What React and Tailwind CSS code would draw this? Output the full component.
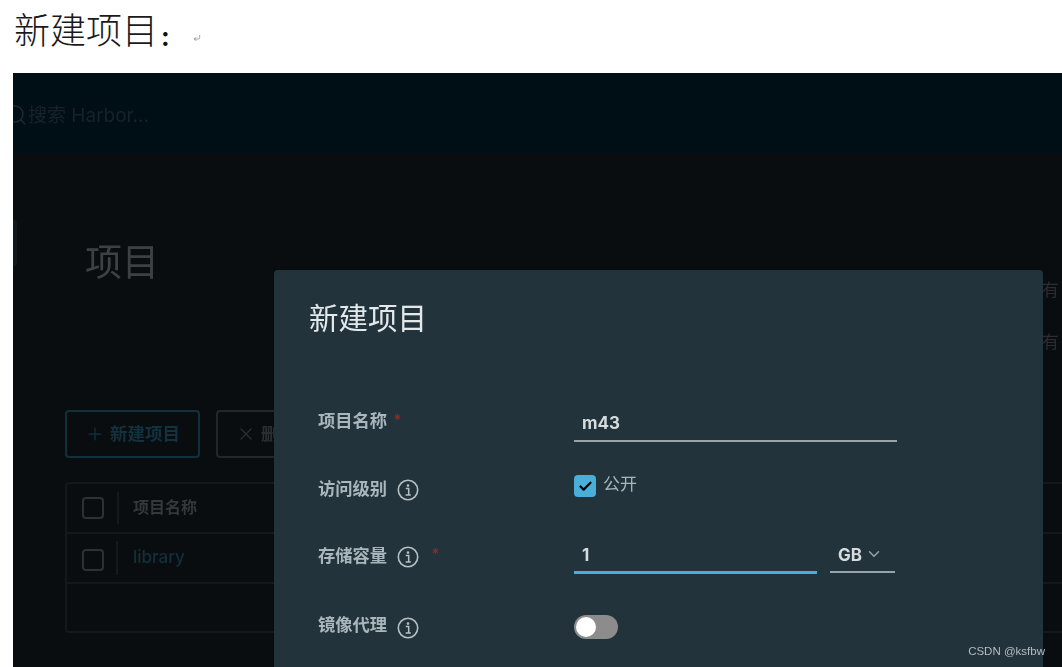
import { Plus, X, Search, ChevronDown, Check, CornerDownLeft } from 'lucide-react';

const cjk = 'font-["Inter","Noto_Sans_CJK_SC",sans-serif]';

function InfoIcon() {
    return (
        <svg width="22" height="22" viewBox="0 0 22 22" fill="none" className="text-[#b4c0c4]">
            <circle cx="11" cy="11" r="9.7" stroke="currentColor" strokeWidth="1.6" />
            <circle cx="11" cy="6.6" r="1.3" fill="currentColor" />
            <path d="M8.8 9.6h2.9v6M8.6 16h5.2" stroke="currentColor" strokeWidth="1.5" />
        </svg>
    );
}

function Required() {
    return <span className="text-[15px] font-bold leading-none text-[#8f2a20]">*</span>;
}

function FieldLabel({ children, info, required, raise }) {
    return (
        <div className="flex w-[256px] items-center">
            <span className={raise ? '-mt-[5px] text-[17.3px] font-bold text-[#a9b7bc]' : 'text-[17.3px] font-bold text-[#a9b7bc]'}>{children}</span>
            {info && <span className="ml-[10px] mt-[1px] flex"><InfoIcon /></span>}
            {required && <span className={info ? 'ml-[12px] -mt-[6px]' : 'ml-[6px] -mt-[4px]'}><Required /></span>}
        </div>
    );
}

function TableRow({ children, height = 'h-[50px]' }) {
    return <div className={`flex items-center border-b-2 border-[#14181b] ${height}`}>{children}</div>;
}

function RowCheck({ className }) {
    return <span className={`ml-[15px] block size-[22px] rounded-[4px] border-2 border-[#2c3133] ${className}`} />;
}

export default function App() {
    return (
        <div className={`h-[667px] w-[1062px] overflow-hidden bg-white ${cjk}`}>
            <div className="flex h-[73px] items-start pl-[14px] pt-[11px]">
                <span className='text-[36px] font-light leading-[42px] text-[#1a1a1a] font-["Liberation_Serif","Noto_Sans_CJK_SC",serif]'>新建项目</span>
                <span className="ml-[3px] mt-[5px] text-[26px] font-bold leading-[42px] text-[#111]">:</span>
                <CornerDownLeft size={8} className="ml-[23px] mt-[23px] text-[#777]" />
            </div>

            <div className="relative ml-[13px] h-[594px] overflow-hidden bg-[#0a0d10] blur-[0.4px]">
                <div className="flex h-[80px] items-center bg-[#000f16]">
                    <Search size={24} strokeWidth={1.5} className="ml-[-9px] mt-[4px] text-[#1d2a30]" />
                    <span className="mt-[7px] text-[19px] text-[#182228]">搜索 Harbor...</span>
                </div>

                <div className="absolute left-0 top-[147px] h-[46px] w-[4px] rounded-r-[3px] bg-[#11171b]" />

                <div className="pl-[52px] pt-[86px]">
                    <h1 className="pl-[20px] text-[37px] leading-[48px] text-[#3e4143]">项目</h1>

                    <div className="mt-[123px] flex gap-[16px]">
                        <button className="flex h-[48px] w-[135px] items-center rounded-[4px] border-2 border-[#10303c] pl-[18px] text-[17.5px] font-bold text-[#12323f]">
                            <Plus size={20} strokeWidth={1.5} />
                            <span className="ml-[5px]">新建项目</span>
                        </button>
                        <button className="flex h-[48px] w-[135px] items-center rounded-[4px] border-2 border-[#22272a] pl-[18px] text-[17.5px] font-bold text-[#2a2e30]">
                            <X size={20} strokeWidth={1.5} />
                            <span className="ml-[5px]">删除</span>
                        </button>
                    </div>

                    <div className="mt-[24px] h-[151px] rounded-l-[4px] border-y-2 border-l-2 border-[#14181b]">
                        <TableRow>
                            <RowCheck />
                            <span className="ml-[13px] h-[32px] w-[2px] bg-[#15191c]" />
                            <span className="ml-[14px] -mt-[2px] text-[16px] font-bold text-[#34383a]">项目名称</span>
                        </TableRow>
                        <TableRow>
                            <RowCheck className="mt-[3px]" />
                            <span className="ml-[12px] h-[34px] w-[2px] bg-[#15191c]" />
                            <span className="ml-[15px] text-[17px] font-medium text-[#12303c]">library</span>
                        </TableRow>
                    </div>
                </div>

                <div className="absolute right-0 top-[205px] flex flex-col gap-[26px] text-[17px] text-[#2b2d2e]">
                    <span className="mr-[3px]">有</span>
                    <span className="mr-[3px]">有</span>
                </div>

                {/* dialog */}
                <div className="absolute left-[261px] top-[197px] h-[420px] w-[769px] rounded-[4px] bg-[#22333b] pl-[35px] pt-[29px]">
                    <h2 className="text-[29.5px] leading-[38px] text-[#e3e9eb]">新建项目</h2>

                    <div className="ml-[9px] mt-[65px] flex flex-col">
                        <div className="flex h-[38px] items-center">
                            <FieldLabel required>项目名称</FieldLabel>
                            <div className="mt-[6px] flex h-[36px] w-[323px] items-center border-b-2 border-[#98a4a9] pl-[8px] pt-[2px] text-[17px] font-bold text-[#d5dcde]">m43</div>
                        </div>

                        <div className="mt-[30px] flex h-[38px] items-center">
                            <FieldLabel info>访问级别</FieldLabel>
                            <div className="-mt-[6px] flex items-center">
                                <span className="flex size-[22px] items-center justify-center rounded-[4px] bg-[#49afd9] text-black">
                                    <Check size={15} strokeWidth={3.5} />
                                </span>
                                <span className="ml-[7px] -mt-[2px] text-[17px] text-[#a9b7bc]">公开</span>
                            </div>
                        </div>

                        <div className="mt-[29px] flex h-[38px] items-center">
                            <FieldLabel info required>存储容量</FieldLabel>
                            <div className="flex gap-[13px]">
                                <div className="flex h-[36px] w-[243px] items-center border-b-[3px] border-[#49afd9] pl-[8px] pt-[2px] text-[17px] font-bold text-[#d5dcde]">1</div>
                                <div className="flex h-[35px] w-[65px] items-center border-b-2 border-[#98a4a9] pl-[8px] pt-[2px] text-[17px] font-bold text-[#d5dcde]">
                                    GB
                                    <ChevronDown size={18} strokeWidth={2} className="ml-[3px] mt-[-3px] text-[#98a4a9]" />
                                </div>
                            </div>
                        </div>

                        <div className="mt-[33px] flex h-[38px] items-center">
                            <FieldLabel info raise>镜像代理</FieldLabel>
                            <div className="flex h-[24px] w-[44px] items-center rounded-full bg-[#8c8c8c] pl-[2px]">
                                <span className="size-[20px] rounded-full bg-white" />
                            </div>
                        </div>
                    </div>
                </div>

                <span className='absolute bottom-[7px] right-[17px] text-[11.5px] text-[#b4bcbf] font-["Liberation_Sans",sans-serif]'>CSDN @ksfbw</span>
            </div>
        </div>
    );
}
